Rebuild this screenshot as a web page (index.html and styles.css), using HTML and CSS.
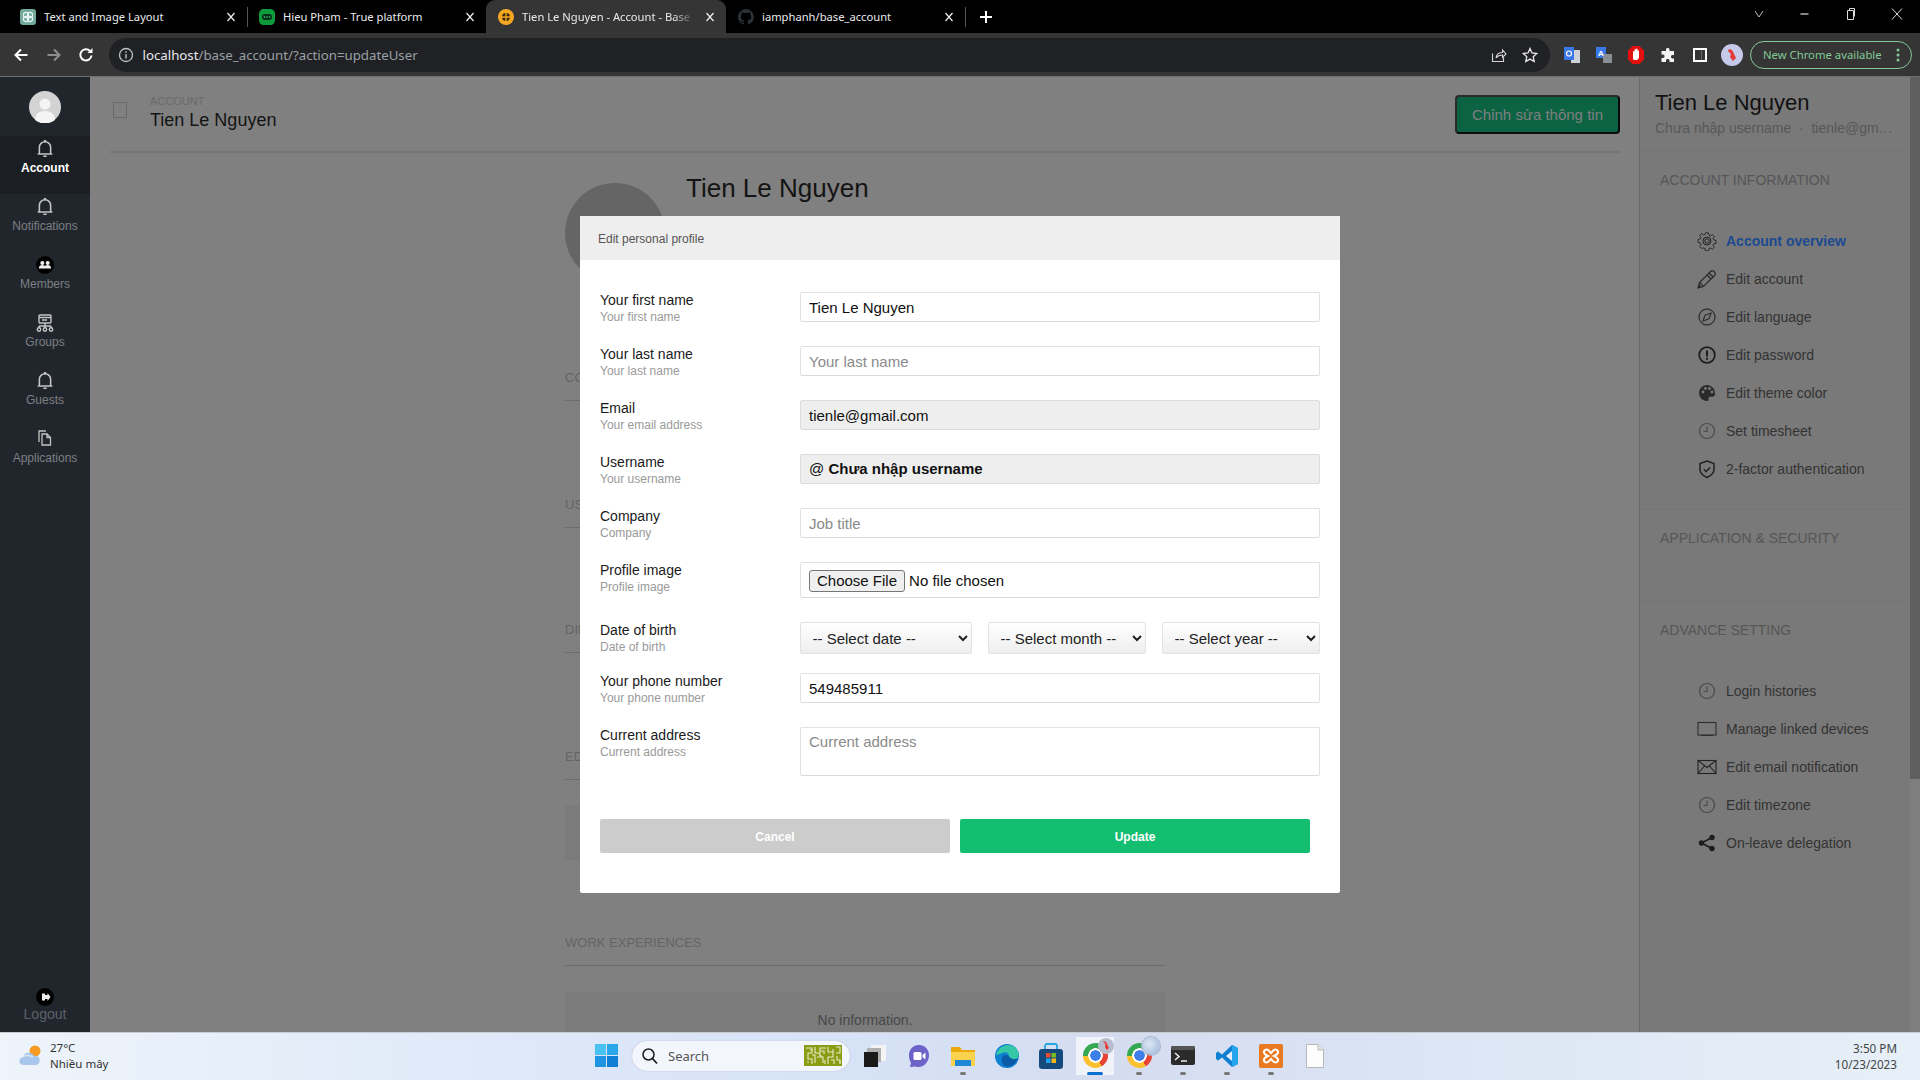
FILE: index.html
```html
<!DOCTYPE html>
<html lang="en">
<head>
<meta charset="utf-8">
<title>Tien Le Nguyen - Account - Base</title>
<link rel="stylesheet" href="styles.css">
</head>
<body>
<svg class="sprite" aria-hidden="true">
  <symbol id="bell" viewBox="0 0 16 18"><path d="M3 13V7.5a5 5 0 0 1 10 0V13M1.5 13.5h13M6.5 15.5h3" fill="none" stroke="currentColor" stroke-width="1.4"/><path d="M7 1h2v2H7z" fill="currentColor"/></symbol>
  <symbol id="people" viewBox="0 0 18 18"><circle cx="9" cy="9" r="9" fill="#000"/><circle cx="6.3" cy="7" r="2" fill="#eee"/><circle cx="11.7" cy="7" r="2" fill="#eee"/><path d="M2.8 12.6c0-2.6 1.6-3.6 3.5-3.6s2.5.8 2.7 1.2c.3-.4 1-1.2 2.7-1.2s3.5 1 3.5 3.6z" fill="#eee"/></symbol>
  <symbol id="groups" viewBox="0 0 18 18"><g fill="none" stroke="currentColor" stroke-width="1.4"><rect x="3" y="1" width="12" height="8" rx="1"/><path d="M3 3.5h12M6 6h5M9 9v3M3 12h12M3 12v2M9 12v2M15 12v2"/><circle cx="3" cy="15.5" r="1.7"/><circle cx="9" cy="15.5" r="1.7"/><circle cx="15" cy="15.5" r="1.7"/></g></symbol>
  <symbol id="apps" viewBox="0 0 18 20"><g fill="none" stroke="currentColor" stroke-width="1.3"><path d="M10 2H3v11"/><path d="M6 5h5l3.500 3.500V16H6zM11 5v3.500h3.500"/></g></symbol>
  <symbol id="logout" viewBox="0 0 18 18"><circle cx="9" cy="9" r="9" fill="#000"/><path d="M6 5.500h3v7H6z" fill="#eee"/><path d="M9 7h2.500V5l3 4-3 4v-2H9z" fill="#eee"/></symbol>
  <symbol id="gear" viewBox="0 0 20 20"><g fill="none" stroke="#222" stroke-width="1"><path d="M8.300 1h3.400l.5 2.600 1.600.7 2.200-1.500 2.200 2.200-1.500 2.200.7 1.600 2.600.5v3.400l-2.600.5-.7 1.600 1.500 2.200-2.200 2.200-2.200-1.500-1.600.7-.5 2.600H8.300l-.5-2.600-1.600-.7L4 18.200 1.800 16l1.500-2.200-.7-1.600L0 11.700V8.300l2.600-.5.7-1.600L1.800 4 4 1.800l2.200 1.500 1.600-.7z" transform="translate(1 1) scale(.9)"/><circle cx="10" cy="10" r="4"/><circle cx="10" cy="10" r="2.200"/></g></symbol>
  <symbol id="pencil" viewBox="0 0 20 20"><g fill="none" stroke="#2a2a2a" stroke-width="1.200"><path d="M1 19l1.500-5.500L13.500 2.500c1-1 2.500-1 3.500 0l.5.500c1 1 1 2.500 0 3.500L6.500 17.500z"/><path d="M2.500 13.500l4 4M12 4l4 4M10 6l4 4"/></g><path d="M1 19l1-3.500 2.500 2.500z" fill="#2a2a2a"/></symbol>
  <symbol id="compass" viewBox="0 0 20 20"><g fill="none" stroke="#333" stroke-width="1.300"><circle cx="10" cy="10" r="8"/><path d="M14 6l-6 2.200L6 14l6-2.200z"/></g></symbol>
  <symbol id="alert" viewBox="0 0 20 20"><circle cx="10" cy="10" r="7.800" fill="none" stroke="#1d1d1d" stroke-width="1.800"/><path d="M9 5.500h2v6H9zM9 12.800h2v2H9z" fill="#1d1d1d"/></symbol>
  <symbol id="palette" viewBox="0 0 20 20"><path d="M10 2a8 8 0 0 0 0 16c1.500 0 2-1 1.500-2-.6-1.200.2-2.300 1.500-2.300h2.500c1.500 0 2.500-1 2.500-2.700C18 5.500 14.500 2 10 2z" fill="#2a2a2a"/><g fill="#7a7a7a"><circle cx="6" cy="9" r="1.400"/><circle cx="8.500" cy="5.500" r="1.400"/><circle cx="12.500" cy="5.500" r="1.400"/><circle cx="15" cy="9" r="1.400"/></g></symbol>
  <symbol id="clock" viewBox="0 0 20 20"><g fill="none" stroke="#4a4a4a" stroke-width="1.200"><circle cx="10" cy="10" r="7.500"/><path d="M10 5.500v5H6.500"/></g></symbol>
  <symbol id="shield" viewBox="0 0 20 20"><g fill="none" stroke="#222" stroke-width="1.500"><path d="M10 2l7 2.500v6c0 4-3.500 6.500-7 8-3.500-1.500-7-4-7-8v-6z"/><path d="M6.800 10.200l2.300 2.300 4-4"/></g></symbol>
  <symbol id="monitor" viewBox="0 0 20 20"><rect x="1" y="3.500" width="18" height="12.500" fill="none" stroke="#2e2e2e" stroke-width="1.100"/><path d="M4 16h12v1H4z" fill="#2e2e2e"/></symbol>
  <symbol id="mail" viewBox="0 0 20 20"><g fill="none" stroke="#222" stroke-width="1.100"><rect x="1" y="3.500" width="18" height="13"/><path d="M1 3.500l9 7 9-7M1 16.500l6.500-7.500M19 16.500L12.500 9"/></g></symbol>
  <symbol id="share" viewBox="0 0 20 20"><g fill="#1d1d1d"><circle cx="15" cy="4.500" r="2.700"/><circle cx="4.500" cy="10" r="2.700"/><circle cx="15" cy="15.500" r="2.700"/></g><path d="M15 4.500L4.500 10 15 15.500" fill="none" stroke="#1d1d1d" stroke-width="1.600"/></symbol>
  <symbol id="x" viewBox="0 0 10 10"><path d="M1.500 1l7 8M8.500 1l-7 8" fill="none" stroke="currentColor" stroke-width="1.200"/></symbol>
</svg>

<div class="screen">
  <header class="tabstrip">
    <div class="tab">
      <svg class="fav" viewBox="0 0 16 16"><rect width="16" height="16" rx="3" fill="#74aa9c"/><g fill="none" stroke="#e6f4ef" stroke-width="1.100"><circle cx="6" cy="6" r="2.600"/><circle cx="10" cy="6" r="2.600"/><circle cx="6" cy="10" r="2.600"/><circle cx="10" cy="10" r="2.600"/></g></svg><span class="tab-title">Text and Image Layout</span><svg class="tab-x"><use href="#x"/></svg>
    </div>
    <div class="tab tab-sep">
      <svg class="fav" viewBox="0 0 16 16"><path d="M5 0h6c3 0 5 2 5 5v6c0 3-2 5-5 5H5c-3 0-5-2-5-5V5c0-3 2-5 5-5z" fill="#0e9b3b"/><rect x="3" y="5" width="10" height="6" rx="3" fill="#06301a"/><g fill="#3fd070"><circle cx="5.500" cy="8" r=".8"/><circle cx="8" cy="8" r=".8"/><circle cx="10.500" cy="8" r=".8"/></g></svg><span class="tab-title">Hieu Pham - True platform</span><svg class="tab-x"><use href="#x"/></svg>
    </div>
    <div class="tab tab-active">
      <svg class="fav" viewBox="0 0 16 16"><circle cx="8" cy="8" r="8" fill="#f5a623"/><circle cx="8" cy="8" r="4" fill="#3a2a08"/><path d="M8 4v8M4 8h8" stroke="#f5a623" stroke-width="1.300"/></svg><span class="tab-title tab-fade">Tien Le Nguyen - Account - Base</span><svg class="tab-x"><use href="#x"/></svg>
    </div>
    <div class="tab">
      <svg class="fav" viewBox="0 0 16 16"><path d="M8 0a8 8 0 0 0-2.500 15.600c.4.100.5-.2.500-.4v-1.400c-2.200.5-2.700-1-2.700-1-.4-.9-.9-1.200-.9-1.200-.7-.5.100-.5.100-.5.800.1 1.200.8 1.200.8.700 1.200 1.900.9 2.300.7.100-.5.300-.9.500-1.100-1.800-.2-3.600-.9-3.600-4 0-.9.300-1.600.8-2.100-.1-.2-.4-1 .1-2.100 0 0 .7-.2 2.200.8a7.600 7.600 0 0 1 4 0c1.500-1 2.200-.8 2.200-.8.400 1.100.2 1.900.1 2.100.5.600.8 1.300.8 2.100 0 3.100-1.900 3.700-3.700 3.900.3.300.6.700.6 1.500v2.200c0 .2.100.5.600.4A8 8 0 0 0 8 0z" fill="#2b3137"/></svg><span class="tab-title">iamphanh/base_account</span><svg class="tab-x"><use href="#x"/></svg>
    </div>
    <span class="strip-sep"></span>
    <svg class="newtab" viewBox="0 0 16 16"><path d="M8 2v12M2 8h12" stroke="#fff" stroke-width="2"/></svg>
    <div class="winctl">
      <span class="winbtn"><svg width="12" height="10" viewBox="0 0 12 10"><path d="M2 2l4 6 4-6" fill="none" stroke="#bbb" stroke-width="1"/></svg></span>
      <span class="winbtn"><svg width="12" height="10" viewBox="0 0 12 10"><path d="M1.500 5h8" stroke="#ddd" stroke-width="1.200"/></svg></span>
      <span class="winbtn"><svg width="12" height="14" viewBox="0 0 12 14"><path d="M2.500 3.500h6v9h-6zM4.500 3.500v-2h5v8" fill="none" stroke="#ddd" stroke-width="1"/></svg></span>
      <span class="winbtn"><svg width="12" height="14" viewBox="0 0 12 14"><path d="M1 1.500l10 11M11 1.500L1 12.500" stroke="#ddd" stroke-width="1"/></svg></span>
    </div>
  </header>

  <div class="toolbar">
    <span class="navbtn"><svg width="16" height="16" viewBox="0 0 16 16"><path d="M14.500 8H2.500M8 2.500L2.500 8 8 13.500" fill="none" stroke="#fff" stroke-width="2"/></svg></span>
    <span class="navbtn"><svg width="16" height="16" viewBox="0 0 16 16"><path d="M1.500 8h12M8 2.500L13.500 8 8 13.500" fill="none" stroke="#8d8d8d" stroke-width="2"/></svg></span>
    <span class="navbtn"><svg width="16" height="16" viewBox="0 0 16 16"><path d="M13.500 8.500A5.600 5.600 0 1 1 12 4" fill="none" stroke="#fff" stroke-width="2"/><path d="M9.500 6H14.500V1z" fill="#fff"/></svg></span>
    <div class="omnibox">
      <svg class="omni-ico" viewBox="0 0 16 16"><circle cx="8" cy="8" r="6.500" fill="none" stroke="#bdc1c6" stroke-width="1.300"/><path d="M7.300 7h1.400v4.500H7.300zM7.300 4.300h1.400v1.500H7.300z" fill="#bdc1c6"/></svg>
      <span class="url"><b>localhost</b>/base_account/?action=updateUser</span>
      <svg class="omni-ico omni-right" viewBox="0 0 16 16"><path d="M1.500 6.500v8h11v-4M5 11c.5-3.500 3-5.500 6.500-5.500V3L15 7l-3.500 3.500V8C8.500 8 6.500 9 5 11z" fill="none" stroke="#d5d5d5" stroke-width="1.100"/></svg>
      <svg class="omni-ico" viewBox="0 0 16 16"><path d="M8 1.500l2 4.500 4.800.5-3.600 3.200 1 4.800L8 12.100l-4.200 2.400 1-4.800L1.200 6.500 6 6z" fill="none" stroke="#e8e8e8" stroke-width="1.300"/></svg>
    </div>
    <div class="ext-row">
      <span class="ext"><svg width="18" height="18" viewBox="0 0 18 18"><rect x="8" y="4" width="9" height="13" fill="#cfd3d8"/><rect x="1" y="1" width="10" height="13" fill="#3b78e7"/><circle cx="6" cy="7.500" r="2.500" fill="none" stroke="#fff" stroke-width="1.200"/></svg></span>
      <span class="ext"><svg width="18" height="18" viewBox="0 0 18 18"><rect x="1" y="1" width="10" height="11" fill="#3b78e7"/><rect x="8" y="8" width="9" height="9" fill="#8a8f96"/><text x="3" y="9.500" class="ext-a">A</text></svg></span>
      <span class="ext"><svg width="18" height="20" viewBox="0 0 18 20"><path d="M5.500 1h7L17 5.500v9L12.500 19h-7L1 14.500v-9z" fill="#e31010"/><path d="M6 14.500V7c0-1.300 1.500-1.300 1.500 0V5c0-1.200 1.500-1.200 1.500 0v-.5c0-1.200 1.500-1.200 1.500 0V6c0-1 1.500-1 1.500 0v5.500c0 2-1 3.500-3 3.500H8z" fill="#fff"/></svg></span>
      <span class="ext"><svg width="16" height="16" viewBox="0 0 16 16"><path d="M6 2.500c0-2 3.500-2 3.500 0V4H14v4h-1.500c-2 0-2 3.500 0 3.500H14V15H9.500v-1.500c0-2-3.500-2-3.500 0V15H1.500v-4H3c2 0 2-3.500 0-3.500H1.500V4H6z" fill="#f1f3f4"/></svg></span>
      <span class="ext"><svg width="16" height="16" viewBox="0 0 16 16"><path d="M1 1h14v14H1zM9.500 3h3.500v10H9.500z" fill="#fff" fill-rule="evenodd"/><path d="M3 3h6.500v10H3z" fill="#353535"/></svg></span>
      <span class="ext"><svg width="22" height="22" viewBox="0 0 22 22"><circle cx="11" cy="11" r="11" fill="#c5cae9"/><path d="M8 5l3 1 4 8-3 3-3-4 1-3-3-3z" fill="#e53935"/></svg></span>
    </div>
    <div class="update-pill"><span>New Chrome available</span><svg width="4" height="14" viewBox="0 0 4 14"><g fill="#81c995"><circle cx="2" cy="2" r="1.500"/><circle cx="2" cy="7" r="1.500"/><circle cx="2" cy="12" r="1.500"/></g></svg></div>
  </div>

  <div class="app">
    <nav class="sidebar">
      <div class="side-top">
        <div class="side-avatar"><svg width="32" height="32" viewBox="0 0 32 32"><circle cx="16" cy="16" r="16" fill="#d3d3d3"/><circle cx="16" cy="13" r="5.500" fill="#f4f4f4"/><path d="M6 29c0-6 4-9 10-9s10 3 10 9a16 16 0 0 1-20 0z" fill="#f4f4f4"/></svg></div>
        <a class="side-item side-active"><svg class="side-ico"><use href="#bell"/></svg><span>Account</span></a>
        <a class="side-item"><svg class="side-ico"><use href="#bell"/></svg><span>Notifications</span></a>
        <a class="side-item"><svg class="side-ico"><use href="#people"/></svg><span>Members</span></a>
        <a class="side-item"><svg class="side-ico"><use href="#groups"/></svg><span>Groups</span></a>
        <a class="side-item"><svg class="side-ico"><use href="#bell"/></svg><span>Guests</span></a>
        <a class="side-item"><svg class="side-ico"><use href="#apps"/></svg><span>Applications</span></a>
      </div>
      <a class="side-logout"><svg class="logout-ico"><use href="#logout"/></svg><span>Logout</span></a>
    </nav>

    <main class="main">
      <div class="page-head">
        <span class="check"></span>
        <div class="crumb">
          <div class="crumb-top">ACCOUNT</div>
          <div class="crumb-name">Tien Le Nguyen</div>
        </div>
        <button class="edit-btn">Chỉnh sửa thông tin</button>
      </div>
      <div class="profile">
        <div class="profile-head">
          <div class="profile-avatar"></div>
          <div class="profile-name">Tien Le Nguyen</div>
        </div>
        <section class="sec sec-contact"><h3>CONTACT INFORMATION</h3></section>
        <section class="sec sec-user"><h3>USER INFORMATION</h3></section>
        <section class="sec sec-diploma"><h3>DIPLOMA</h3></section>
        <section class="sec sec-edu"><h3>EDUCATION</h3><div class="empty-short"></div></section>
        <section class="sec"><h3>WORK EXPERIENCES</h3><div class="empty">No information.</div></section>
      </div>
    </main>

    <aside class="panel">
      <div class="panel-head">
        <div class="panel-name">Tien Le Nguyen</div>
        <div class="panel-sub">Chưa nhập username &nbsp;·&nbsp; tienle@gmail.com</div>
      </div>
      <div class="panel-sec">
        <h4>ACCOUNT INFORMATION</h4>
        <ul class="menu">
          <li class="menu-on"><svg><use href="#gear"/></svg>Account overview</li>
          <li><svg><use href="#pencil"/></svg>Edit account</li>
          <li><svg><use href="#compass"/></svg>Edit language</li>
          <li><svg><use href="#alert"/></svg>Edit password</li>
          <li><svg><use href="#palette"/></svg>Edit theme color</li>
          <li><svg><use href="#clock"/></svg>Set timesheet</li>
          <li><svg><use href="#shield"/></svg>2-factor authentication</li>
        </ul>
      </div>
      <div class="panel-sec panel-sec-empty">
        <h4>APPLICATION &amp; SECURITY</h4>
      </div>
      <div class="panel-sec panel-sec-last">
        <h4>ADVANCE SETTING</h4>
        <ul class="menu">
          <li><svg><use href="#clock"/></svg>Login histories</li>
          <li><svg><use href="#monitor"/></svg>Manage linked devices</li>
          <li><svg><use href="#mail"/></svg>Edit email notification</li>
          <li><svg><use href="#clock"/></svg>Edit timezone</li>
          <li><svg><use href="#share"/></svg>On-leave delegation</li>
        </ul>
      </div>
    </aside>
    <div class="scrollbar"><div class="thumb"></div></div>

    <form class="modal">
      <div class="modal-head">Edit personal profile</div>
      <div class="modal-body">
        <div class="row">
          <label class="lab">Your first name<small>Your first name</small></label>
          <input class="field" type="text" value="Tien Le Nguyen">
        </div>
        <div class="row">
          <label class="lab">Your last name<small>Your last name</small></label>
          <input class="field" type="text" placeholder="Your last name">
        </div>
        <div class="row">
          <label class="lab">Email<small>Your email address</small></label>
          <input class="field field-ro" type="text" value="tienle@gmail.com" readonly>
        </div>
        <div class="row">
          <label class="lab">Username<small>Your username</small></label>
          <div class="field field-ro">@ <b>Chưa nhập username</b></div>
        </div>
        <div class="row">
          <label class="lab">Company<small>Company</small></label>
          <input class="field" type="text" placeholder="Job title">
        </div>
        <div class="row">
          <label class="lab">Profile image<small>Profile image</small></label>
          <input class="field field-file" type="file">
        </div>
        <div class="row row-tight">
          <label class="lab">Date of birth<small>Date of birth</small></label>
          <div class="selects">
            <select class="sel sel-date"><option>-- Select date --</option></select>
            <select class="sel"><option>-- Select month --</option></select>
            <select class="sel"><option>-- Select year --</option></select>
          </div>
        </div>
        <div class="row">
          <label class="lab">Your phone number<small>Your phone number</small></label>
          <input class="field" type="text" value="549485911">
        </div>
        <div class="row row-last">
          <label class="lab">Current address<small>Current address</small></label>
          <textarea class="field field-area" placeholder="Current address"></textarea>
        </div>
        <div class="actions">
          <button type="button" class="btn btn-cancel">Cancel</button>
          <button type="button" class="btn btn-update">Update</button>
        </div>
      </div>
    </form>
  </div>

  <footer class="taskbar">
    <div class="weather">
      <svg width="26" height="26" viewBox="0 0 26 26"><circle cx="17" cy="8" r="5.500" fill="#f59a23"/><path d="M6 22c-6 0-6-7-1-8 1-5 9-6 11-1 5-1 7 4 5 7-1 1.500-2 2-4 2z" fill="#a9c7ec"/><path d="M4 14c3-2 8-2 11 0" fill="none" stroke="#dbe8f7" stroke-width="1.500"/></svg>
      <div class="weather-text"><div>27°C</div><div>Nhiều mây</div></div>
    </div>
    <svg class="winlogo" viewBox="0 0 23 23"><rect width="11" height="11" fill="#49c2f2"/><rect x="12" width="11" height="11" fill="#2aa6ea"/><rect y="12" width="11" height="11" fill="#1e94e3"/><rect x="12" y="12" width="11" height="11" fill="#0f7fd6"/></svg>
    <div class="search">
      <svg width="18" height="18" viewBox="0 0 18 18"><circle cx="7.500" cy="7.500" r="5.500" fill="none" stroke="#1c1c1c" stroke-width="1.500"/><path d="M11.500 11.500l4.500 5" stroke="#1c1c1c" stroke-width="1.800"/></svg>
      <span>Search</span>
      <svg class="search-art" viewBox="0 0 38 21"><rect width="38" height="21" fill="#8a9b14"/><g fill="none" stroke="#e8ecc8" stroke-width="1.100"><path d="M2 3h6v5H4v6h4v5M11 2v6h5V3h6M13 12h6v6M24 2v5h5v5h-5v7M32 2h4v6h-4M33 11v4h3v4M8 10h3v8M15 9l3 3M27 15h3v4M6 5h2M17 6h3v3M21 15v4M3 17h2M29 4v3M35 17h2"/></g></svg>
    </div>
    <div class="dock">
      <span class="dock-item"><svg width="24" height="24" viewBox="0 0 24 24"><rect x="8" y="1" width="15" height="16" fill="#f4f4f4"/><rect x="4" y="4" width="14" height="14" fill="#b0b0b0"/><rect x="1" y="8" width="14" height="15" fill="#1a1a1a"/></svg></span>
      <span class="dock-item"><svg width="24" height="24" viewBox="0 0 24 24"><path d="M12 1c6 0 10 4.500 10 10.500S17 23 12 23c-1.500 0-2.500 0-3.500-.5L3 23l1-4.500C2.500 16.500 2 14 2 11.500 2 5.500 6 1 12 1z" fill="#6d62c7"/><rect x="6.500" y="8" width="8" height="8" rx="1.500" fill="#fff"/><path d="M15.500 11l3-2.500v7l-3-2.500z" fill="#fff"/></svg></span>
      <span class="dock-item dock-dot"><svg width="24" height="24" viewBox="0 0 24 24"><path d="M0 3h9l2 3h13v15H0z" fill="#e9a90f"/><rect y="8" width="24" height="14" fill="#fbd24d"/><rect x="4" y="16" width="16" height="6" fill="#1f88d6"/></svg></span>
      <span class="dock-item"><svg width="24" height="26" viewBox="0 0 24 26"><circle cx="12" cy="13" r="12" fill="#0f7fd0"/><path d="M1 12C3 3 12 0 18 3c5 2.500 6.500 8 5 12-2 2-9 2-9-2 0-3-4-5-7-3-3 1.500-5 2-6 2z" fill="#35c6a6"/><path d="M7 18c-1-3 1-6 4-6s3 3 7 4c2 .5 4-.5 5-1-3 7-9 10-13 8-2-1-3-3-3-5z" fill="#0b5aa6"/></svg></span>
      <span class="dock-item"><svg width="24" height="26" viewBox="0 0 24 26"><path d="M6 8V3c0-1 1-2 2-2h8c1 0 2 1 2 2v5" fill="none" stroke="#22a7e0" stroke-width="1.800"/><rect x="0" y="6" width="24" height="20" rx="3" fill="#174a7c"/><rect x="7" y="10" width="4.500" height="4.500" fill="#ea4d2d"/><rect x="12.500" y="10" width="4.500" height="4.500" fill="#7cbb24"/><rect x="7" y="15.500" width="4.500" height="4.500" fill="#21a3ea"/><rect x="12.500" y="15.500" width="4.500" height="4.500" fill="#fbb913"/></svg></span>
      <span class="dock-item dock-running"><span class="chrome"></span><span class="chrome-badge"><svg width="16" height="16" viewBox="0 0 16 16"><circle cx="8" cy="8" r="8" fill="#b9bdd0"/><path d="M5 3l3 1 3 6-2 2-2-3 .5-2.500z" fill="#e53935"/></svg></span></span>
      <span class="dock-item dock-dot"><span class="chrome"></span><span class="chrome-badge badge-globe"></span></span>
      <span class="dock-item dock-dot"><svg width="24" height="20" viewBox="0 0 24 20"><rect width="24" height="19" rx="2" fill="#2b2b2b"/><rect width="24" height="4" rx="2" fill="#555"/><path d="M4 7l4 3.500L4 14" fill="none" stroke="#eee" stroke-width="1.500"/><path d="M10 15h6" stroke="#eee" stroke-width="1.500"/></svg></span>
      <span class="dock-item dock-dot"><svg width="24" height="24" viewBox="0 0 24 24"><path d="M17 1l6 3v16l-6 3-10-9.500L3 16.500 1 15v-6l2-1.500 4 3z" fill="#0e7fcf"/><path d="M17 1l6 3v16l-6 3z" fill="#26a5ee"/><path d="M17 7l-6 5 6 5z" fill="#e3eef8"/></svg></span>
      <span class="dock-item dock-dot"><svg width="24" height="24" viewBox="0 0 24 24"><rect width="24" height="24" rx="2" fill="#ea7a22"/><path d="M6 6c3-2 4 1 6 3 2-2 3-5 6-3 3 3-1 5-3 6 2 1 6 3 3 6-3 2-4-1-6-3-2 2-3 5-6 3-3-3 1-5 3-6-2-1-6-3-3-6z" fill="none" stroke="#fff" stroke-width="2"/></svg></span>
      <span class="dock-item"><svg width="18" height="24" viewBox="0 0 18 24"><path d="M.5.500H12L17.500 6v17.500H.5z" fill="#fdfdfd" stroke="#b8b8b8"/><path d="M12 .5V6h5.500" fill="#e6e6e6" stroke="#b8b8b8"/></svg></span>
    </div>
    <div class="clock"><div>3:50 PM</div><div>10/23/2023</div></div>
  </footer>
</div>
</body>
</html>
```

FILE: styles.css
```css
* { box-sizing: border-box; }
html, body { margin: 0; height: 100%; overflow: hidden; }
body { font-family: "Liberation Sans", Arial, sans-serif; background: #808080; }
.sprite { display: none; }

.screen { display: flex; flex-direction: column; height: 1080px; width: 1920px; }

/* Browser chrome */
.tabstrip { display: flex; align-items: stretch; height: 33px; padding-left: 8px; background: #000; font-family: "Noto Sans", sans-serif; font-size: 11.200px; color: #e8eaed; flex: none; }
.tab { width: 239px; display: flex; align-items: center; gap: 8px; padding: 0 8px 0 12px; position: relative; }
.tab-sep::before { content: ""; position: absolute; left: 0; top: 7px; height: 20px; width: 1px; background: #555; }
.tab-active { width: 240px; background: #353535; border-radius: 9px 9px 0 0; }
.tab-title { flex: 1; min-width: 0; white-space: nowrap; overflow: hidden; }
.tab-fade { -webkit-mask-image: linear-gradient(90deg, #000 88%, transparent); mask-image: linear-gradient(90deg, #000 88%, transparent); }
.tab-x { width: 16px; height: 10px; color: #f0f0f0; flex: none; }
.fav { width: 16px; height: 16px; flex: none; display: block; }
.strip-sep { width: 1px; height: 20px; margin: 7px 0 0 0; background: #555; flex: none; }
.newtab { width: 16px; height: 16px; margin: 9px 0 0 12px; flex: none; }
.winctl { display: flex; margin-left: auto; height: 28px; }
.winbtn { width: 46px; display: flex; align-items: center; justify-content: center; }

.toolbar { display: flex; align-items: center; height: 44px; padding: 1px 8px 0 5px; gap: .5px; background: #353535; border-bottom: 1px solid #6e6e6e; flex: none; }
.navbtn { width: 32px; height: 32px; display: flex; align-items: center; justify-content: center; flex: none; }
.omnibox { flex: 1; min-width: 0; height: 34px; margin-left: 6px; padding: 0 12px 0 9px; display: flex; align-items: center; gap: 9px; background: #202124; border-radius: 17px; }
.omni-ico { width: 16px; height: 16px; flex: none; }
.omni-right { margin-left: auto; margin-right: 6px; }
.url { font-family: "Noto Sans", sans-serif; font-size: 13.250px; color: #9aa0a6; white-space: nowrap; }
.url b { font-weight: 400; color: #e8eaed; }
.ext-row { display: flex; margin-left: 5px; flex: none; }
.ext { width: 32px; height: 32px; display: flex; align-items: center; justify-content: center; }
.ext-a { font: 700 8px "Liberation Sans", sans-serif; fill: #fff; }
.update-pill { width: 162px; height: 28px; margin: -1px 0 0 2px; padding: 0 11px 0 12px; display: flex; align-items: center; justify-content: space-between; border: 1px solid #81c995; border-radius: 14px; font-family: "Noto Sans", sans-serif; font-size: 11.300px; color: #81c995; white-space: nowrap; flex: none; }

/* App shell */
.app { flex: 1; min-height: 0; display: flex; position: relative; overflow: hidden; background: #808080; }

.sidebar { width: 90px; flex: none; display: flex; flex-direction: column; justify-content: space-between; background: #21262d; font-size: 12px; color: #7d7f82; }
.side-avatar { height: 59px; padding-top: 14px; display: flex; justify-content: center; }
.side-item { height: 58px; padding-top: 2px; display: flex; flex-direction: column; align-items: center; }
.side-item span { line-height: 16px; }
.side-ico { width: 18px; height: 22px; color: #c4c4c4; }
.side-active { background: #1b1f24; color: #fff; font-weight: 700; }
.side-logout { display: flex; flex-direction: column; align-items: center; padding-bottom: 9px; font-size: 14px; color: #5d6167; }
.side-logout span { line-height: 18px; }
.logout-ico { width: 18px; height: 18px; margin-bottom: -1px; }

.main { flex: 1; min-width: 0; overflow: hidden; padding-right: 19px; padding-left: 20px; background: #808080; }
.page-head { height: 76px; display: flex; align-items: center; padding-left: 3px; border-bottom: 2px solid #757575; }
.check { width: 14px; height: 16px; border: 1px solid #6a6a6a; margin-top: -9px; }
.crumb { margin-left: 23px; margin-top: -3px; }
.crumb-top { font-size: 11px; line-height: 14px; color: #6a6a6a; }
.crumb-name { font-size: 18px; line-height: 22px; color: #141414; margin-top: 1px; }
.edit-btn { width: 165px; height: 39px; margin-left: auto; padding: 0; border: 2px solid #2a2a2a; border-right-color: #0a0a0a; border-bottom-color: #0a0a0a; border-radius: 4px; background: #0b6344; color: #808080; font: 15px "Liberation Sans", sans-serif; }

.profile { width: 600px; margin-left: 455px; margin-top: 30px; }
.profile-head { display: flex; gap: 21px; height: 185px; }
.profile-avatar { width: 100px; height: 100px; border-radius: 50%; background: #656565; flex: none; }
.profile-name { font-size: 26px; line-height: 30px; color: #141414; margin-top: -10px; }
.sec h3 { margin: 0; height: 33px; font-size: 13px; font-weight: 400; line-height: 20px; color: #646464; border-bottom: 1px solid #6c6c6c; white-space: nowrap; }
.sec-contact { margin-bottom: 94px; }
.sec-user { margin-bottom: 92px; }
.sec-diploma { margin-bottom: 94px; }
.sec-edu { margin-bottom: 73px; }
.empty-short { height: 55px; margin-top: 25px; background: #7b7b7b; }
.empty { margin-top: 26px; padding-top: 18px; height: 120px; background: #7b7b7b; color: #484848; font-size: 14px; line-height: 20px; text-align: center; }

.panel { width: 271px; flex: none; border-left: 1px solid #6a6a6a; background: #797979; }
.panel-head { height: 75px; padding: 13px 0 0 15px; border-bottom: 1px solid #757575; }
.panel-name { font-size: 22px; line-height: 26px; color: #111; }
.panel-sub { width: 240px; margin-top: 2px; font-size: 14px; line-height: 20px; color: #575757; white-space: nowrap; overflow: hidden; text-overflow: ellipsis; }
.panel-sec { padding: 18px 0 21px 20px; border-bottom: 1px solid #757575; }
.panel-sec-empty { height: 92px; }
.panel-sec-last { border-bottom: 0; }
.panel-sec h4 { margin: 0; font-size: 14px; font-weight: 400; line-height: 20px; color: #565656; white-space: nowrap; }
.menu { list-style: none; margin: 32px 0 0; padding: 0 0 0 37px; }
.menu li { height: 38px; display: flex; align-items: center; gap: 9px; font-size: 14px; color: #333; }
.menu svg { width: 20px; height: 20px; flex: none; }
.menu .menu-on { color: #1b4a90; font-weight: 700; }

.scrollbar { width: 10px; flex: none; background: #7e7e7e; }
.thumb { height: 702px; background: #5f5f5f; }

/* Modal */
.modal { position: absolute; left: 580px; top: 139px; width: 760px; background: #fff; border-radius: 2px; }
.modal-head { height: 44px; padding: 2px 18px 0; display: flex; align-items: center; background: #eeeeee; font-size: 12px; color: #555; }
.modal-body { padding: 32px 20px 40px; }
.row { display: flex; margin-bottom: 24px; }
.row-tight { margin-bottom: 19px; }
.row-last { margin-bottom: 43px; }
.lab { width: 200px; height: 30px; flex: none; font-size: 14px; line-height: 16px; color: #1a1a1a; }
.lab small { display: block; margin-top: 1px; font-size: 12px; line-height: 17px; color: #9a9a9a; }
.field { flex: 1; min-width: 0; height: 30px; padding: 0 8px; margin: 0; border: 1px solid #e2e2e2; border-bottom-color: #dadada; border-radius: 2px; background: #fff; font: 15px/28px "Liberation Sans", sans-serif; color: #111; outline: 0; }
.field::placeholder { color: #8a8a8a; opacity: 1; }
.field-ro { background: #eeeeee; border-color: #dcdcdc; }
.field-file { height: 36px; padding: 6px 8px 4px; line-height: 24px; }
.field-file::file-selector-button { margin: 0 4px 0 0; height: 22px; padding: 0 7px; border: 1px solid #767676; border-radius: 3px; background: #efefef; font: 15px "Liberation Sans", sans-serif; color: #111; }
.field-area { height: 49px; padding: 4px 8px; line-height: 20px; resize: none; display: block; }
.selects { flex: 1; display: flex; gap: 16px; }
.sel { flex: 0 0 158px; height: 32px; padding-left: 7.500px; border: 1px solid #e2e2e2; border-radius: 2px; background: linear-gradient(#fff, #eeeeee); font: 15px "Liberation Sans", sans-serif; color: #222; }
.sel-date { flex-basis: 172px; }
.actions { display: flex; gap: 10px; }
.btn { width: 350px; height: 34px; padding: 1px 0 0; border: 0; border-radius: 2px; color: #fff; font: 700 12px "Liberation Sans", sans-serif; }
.btn-cancel { background: #cccccc; }
.btn-update { background: #14be70; }

/* Taskbar */
.taskbar { height: 48px; flex: none; display: flex; align-items: center; padding: 0 0 2px 18px; font-family: "Noto Sans", sans-serif; font-size: 11.500px; color: #222; border-top: 1px solid #c9cdd3; background: linear-gradient(90deg, #eef4fa 0%, #dbe6f8 32%, #d6e2f6 45%, #d5dcf0 58%, #dde7f5 78%, #e7f0f8 100%); position: relative; }
.weather { width: 577px; flex: none; display: flex; align-items: center; gap: 6px; }
.weather-text { line-height: 16px; color: #333; }
.winlogo { width: 23px; height: 23px; flex: none; }
.search { width: 218px; height: 30px; margin-left: 14px; padding: 0 8px 0 9px; display: flex; align-items: center; gap: 9px; border-radius: 15px; background: #f3f6fc; box-shadow: 0 0 1px #99a; font-size: 13px; color: #555; flex: none; }
.search-art { width: 38px; height: 21px; margin-left: auto; }
.dock { display: flex; margin-left: 3px; }
.dock-item { width: 44px; height: 38px; display: flex; align-items: center; justify-content: center; position: relative; flex: none; }
.dock-dot::after, .dock-running::after { content: ""; position: absolute; bottom: 0; left: 19px; width: 6px; height: 3px; border-radius: 2px; background: #777; }
.dock-running { background: linear-gradient(#f0f3fa, #f0f3fa) center / 38px 38px no-repeat; }
.dock-running::after { left: 14px; width: 16px; background: #0b6fd0; }
.chrome { width: 25px; height: 25px; border-radius: 50%; background: radial-gradient(circle, #3f7fe8 0 5px, #fff 5.500px 7px, transparent 7.500px), conic-gradient(from 30deg, #e94335 0 120deg, #fbc02d 120deg 240deg, #34a853 240deg 360deg); }
.chrome-badge { position: absolute; top: 1px; right: 3px; width: 16px; height: 16px; border-radius: 50%; display: block; }
.badge-globe { width: 18px; height: 18px; right: 1px; top: 0; background: radial-gradient(circle at 40% 40%, #dce6f5, #9bb3d9); box-shadow: 0 0 0 1px #a9b4cf; }
.clock { margin-left: auto; padding-right: 23px; text-align: right; line-height: 16px; color: #444; font-size: 11.700px; }
```
